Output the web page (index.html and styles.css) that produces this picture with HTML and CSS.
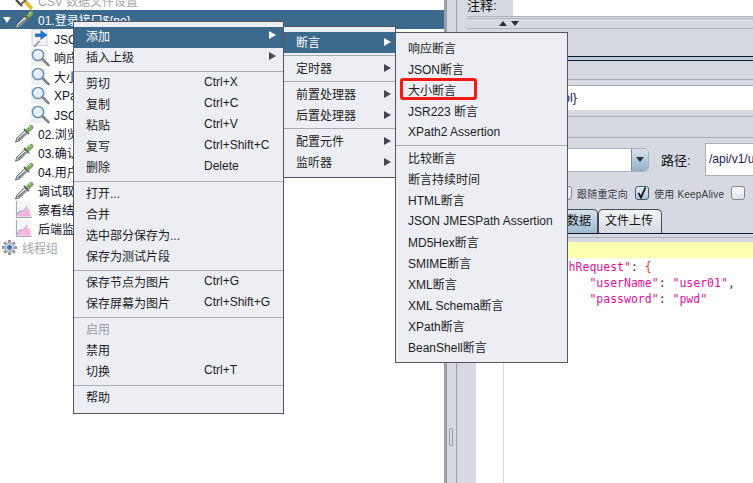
FILE: index.html
```html
<!DOCTYPE html>
<html lang="zh">
<head>
  <meta charset="UTF-8" />
  <title>JMeter</title>
  <link rel="stylesheet" href="styles.css">
</head>
<body>
  <svg class="defs" width="0" height="0">
    <symbol id="i-dropper" viewBox="0 0 19 19">
      <path d="M0.5 18 L2 14 L10 6.5 L12.5 9 L5 16.5 Z" fill="#f0f2f3" stroke="#5a6066" stroke-width="1"/>
      <path d="M2 16.5 L3.5 14.5 L10.5 8.5 L11 9.5 L4.5 16 Z" fill="#6f767c"/>
      <path d="M9 5 L14 10" stroke="#5d6a58" stroke-width="1.8"/>
      <path d="M11.5 5.5 L14.5 2 Q16 0.5 17.5 1.8 Q19 3.4 17.5 5 L13.5 8 Z" fill="#7fb356" stroke="#5d9440" stroke-width="0.7"/>
      <path d="M14 3.8 L15.6 2.4" stroke="#d6ecc2" stroke-width="1"/>
    </symbol>
    <symbol id="i-lens" viewBox="0 0 19 19">
      <rect x="0" y="1.5" width="15" height="16.5" fill="#eef0f2"/>
      <circle cx="7" cy="7" r="5.6" fill="#e2eefa" stroke="#6c90b6" stroke-width="1.5"/>
      <path d="M4 5.5 Q5.5 3 8.5 3.4" stroke="#fff" stroke-width="1.3" fill="none"/>
      <path d="M11.5 11.2 L17.4 17.2" stroke="#808286" stroke-width="2.6" stroke-linecap="round"/>
    </symbol>
    <symbol id="i-extract" viewBox="0 0 19 19">
      <rect x="1" y="0.5" width="15" height="16" fill="#f1f3f4" stroke="#d0d2d6"/>
      <path d="M9.5 1 L16.5 6 L9.5 11 L9.5 8 L4 8 L4 4.5 L9.5 4.5 Z" fill="#2a73c9"/>
      <path d="M8.5 12 L3 18" stroke="#8b9096" stroke-width="1.6"/>
    </symbol>
    <symbol id="i-chart" viewBox="0 0 19 19">
      <rect x="0.5" y="0.5" width="16" height="17" fill="#f3f4f6"/>
      <path d="M1.5 1 V17.5 H17" fill="none" stroke="#a6a9ae"/>
      <path d="M2 16.5 Q4 11 7 12 Q9 13 11 8 Q14 8 15 12 L16 16.5 Z" fill="#f4b4de"/>
      <path d="M2 15 Q4 10 7 11 Q9 12 12 6" fill="none" stroke="#a08fc8"/>
    </symbol>
    <symbol id="i-gear" viewBox="0 0 17 17">
      <path d="M8.5 1 V16 M1 8.5 H16 M3.2 3.2 L13.8 13.8 M13.8 3.2 L3.2 13.8" stroke="#8f959c" stroke-width="3"/>
      <circle cx="8.5" cy="8.5" r="5.2" fill="#b4bac0"/>
      <circle cx="8.5" cy="8.5" r="3" fill="#3f6fa6" stroke="#eef2f5"/>
    </symbol>
    <symbol id="i-broom" viewBox="0 0 19 10">
      <path d="M1 0 L7 6" stroke="#444" stroke-width="2.2"/>
      <path d="M9 0 L17 9" stroke="#e8b820" stroke-width="3.4"/>
      <path d="M6 4 L11 0" stroke="#6b6b6b" stroke-width="2"/>
    </symbol>
  </svg>

  <div class="app">
    <div class="tree">
      <div class="node muted"><svg class="ico-top"><use href="#i-broom"/></svg>CSV 数据文件设置</div>
      <div class="node selected"><span class="twist"></span><svg class="ico"><use href="#i-dropper"/></svg>01.登录接口${no}</div>
      <div class="node sub"><svg class="ico"><use href="#i-extract"/></svg>JSON提取</div>
      <div class="node sub"><svg class="ico"><use href="#i-lens"/></svg>响应断言</div>
      <div class="node sub"><svg class="ico"><use href="#i-lens"/></svg>大小断言</div>
      <div class="node sub"><svg class="ico"><use href="#i-lens"/></svg>XPath2</div>
      <div class="node sub"><svg class="ico"><use href="#i-lens"/></svg>JSON断言</div>
      <div class="node"><svg class="ico"><use href="#i-dropper"/></svg>02.浏览</div>
      <div class="node"><svg class="ico"><use href="#i-dropper"/></svg>03.确认</div>
      <div class="node"><svg class="ico"><use href="#i-dropper"/></svg>04.用户</div>
      <div class="node"><svg class="ico"><use href="#i-dropper"/></svg>调试取样器</div>
      <div class="node"><svg class="ico"><use href="#i-chart"/></svg>察看结果树</div>
      <div class="node"><svg class="ico"><use href="#i-chart"/></svg>后端监听器</div>
      <div class="node root muted"><svg class="ico-gear"><use href="#i-gear"/></svg>线程组</div>
    </div>

    <div class="splitter"><span class="grip"></span></div>

    <div class="detail">
      <div class="comment-row"><span class="comment-label">注释:</span><div class="comment-input"></div></div>
      <div class="collapse-bar"><span class="tri-up"></span><span class="tri-down"></span></div>
      <div class="blue-rule"></div>
      <div class="name-box"><div class="name-input">ol}</div></div>
      <div class="name-gap"></div>
      <div class="path-row">
        <div class="combo"><div class="combo-btn"><span class="tri-down"></span></div></div>
        <span class="path-label">路径:</span>
        <div class="path-input">/api/v1/user/login</div>
      </div>
      <div class="check-row">
        <span class="check"></span><span class="check-label">跟随重定向</span>
        <span class="check on"><svg width="12" height="12" viewBox="0 0 12 12"><path d="M2.5 6 L5 10.5 L9.5 0.5" fill="none" stroke="#111" stroke-width="1.8"/></svg></span><span class="check-label">使用 KeepAlive</span>
        <span class="check"></span>
      </div>
      <div class="tabs">
        <div class="tab active">消息体数据</div>
        <div class="tab">文件上传</div>
      </div>
      <div class="tab-rule"></div>
      <div class="editor">
        <div class="hint"></div>
        <div class="code-wrap">
          <div class="gutter"></div>
<pre class="code"><span class="k"> "authRequest"</span><span class="p">:</span> <span class="b">{</span>
<span class="k">        "userName"</span><span class="p">:</span> <span class="k">"user01"</span><span class="p">,</span>
<span class="k">        "password"</span><span class="p">:</span> <span class="k">"pwd"</span></pre>
        </div>
      </div>
    </div>
  </div>

  <div class="menu menu-main">
    <div class="item hot"><span class="label">添加</span><span class="arrow"></span></div>
    <div class="item"><span class="label">插入上级</span><span class="arrow"></span></div>
    <div class="sep"></div>
    <div class="item"><span class="label">剪切</span><span>Ctrl+X</span></div>
    <div class="item"><span class="label">复制</span><span>Ctrl+C</span></div>
    <div class="item"><span class="label">粘贴</span><span>Ctrl+V</span></div>
    <div class="item"><span class="label">复写</span><span>Ctrl+Shift+C</span></div>
    <div class="item"><span class="label">删除</span><span>Delete</span></div>
    <div class="sep"></div>
    <div class="item"><span class="label">打开...</span></div>
    <div class="item"><span class="label">合并</span></div>
    <div class="item"><span class="label">选中部分保存为...</span></div>
    <div class="item"><span class="label">保存为测试片段</span></div>
    <div class="sep"></div>
    <div class="item"><span class="label">保存节点为图片</span><span>Ctrl+G</span></div>
    <div class="item"><span class="label">保存屏幕为图片</span><span>Ctrl+Shift+G</span></div>
    <div class="sep"></div>
    <div class="item off"><span class="label">启用</span></div>
    <div class="item"><span class="label">禁用</span></div>
    <div class="item"><span class="label">切换</span><span>Ctrl+T</span></div>
    <div class="sep"></div>
    <div class="item"><span class="label">帮助</span></div>
  </div>

  <div class="menu menu-add">
    <div class="item hot"><span class="label">断言</span><span class="arrow"></span></div>
    <div class="sep"></div>
    <div class="item"><span class="label">定时器</span><span class="arrow"></span></div>
    <div class="sep"></div>
    <div class="item"><span class="label">前置处理器</span><span class="arrow"></span></div>
    <div class="item"><span class="label">后置处理器</span><span class="arrow"></span></div>
    <div class="sep"></div>
    <div class="item"><span class="label">配置元件</span><span class="arrow"></span></div>
    <div class="item"><span class="label">监听器</span><span class="arrow"></span></div>
  </div>

  <div class="menu menu-assert">
    <div class="item">响应断言</div>
    <div class="item">JSON断言</div>
    <div class="item">大小断言<span class="mark"></span></div>
    <div class="item">JSR223 断言</div>
    <div class="item">XPath2 Assertion</div>
    <div class="sep"></div>
    <div class="item">比较断言</div>
    <div class="item">断言持续时间</div>
    <div class="item">HTML断言</div>
    <div class="item">JSON JMESPath Assertion</div>
    <div class="item">MD5Hex断言</div>
    <div class="item">SMIME断言</div>
    <div class="item">XML断言</div>
    <div class="item">XML Schema断言</div>
    <div class="item">XPath断言</div>
    <div class="item">BeanShell断言</div>
  </div>
</body>
</html>
```

FILE: styles.css
```css
:root {
  --panel: #d6d9e1;
  --menu: #eceef3;
  --hot: #3c6a8c;
  --line: #a9abb5;
  --dark: #10182a;
}

html, body {
  margin: 0;
  height: 100%;
  overflow: hidden;
  background: #fff;
}

body {
  position: relative;
  font-family: "Liberation Sans", "Noto Sans CJK SC", sans-serif;
  font-size: 12px;
  color: #1c1c24;
}

.defs {
  position: absolute;
}

.app {
  display: flex;
  width: 753px;
  height: 483px;
  overflow: hidden;
}

/* left tree */
.tree {
  width: 444px;
  flex: none;
  margin-top: -9px;
}

.node {
  display: flex;
  align-items: center;
  height: 19px;
  padding-left: 15px;
  color: #10102a;
  white-space: nowrap;
}

.node.sub {
  padding-left: 31px;
}

.node.selected {
  position: relative;
  background: var(--hot);
  color: #fff;
}

.node.muted {
  color: #a4a6aa;
}

.node.root {
  padding-left: 1px;
}

.ico {
  width: 19px;
  height: 19px;
  margin-right: 4px;
  flex: none;
}

.ico-top {
  width: 19px;
  height: 10px;
  margin: 9px 4px 0 0;
  flex: none;
}

.ico-gear {
  width: 17px;
  height: 17px;
  margin-right: 4px;
  flex: none;
}

.twist {
  position: absolute;
  left: 3px;
  top: 7px;
  border-left: 4px solid transparent;
  border-right: 4px solid transparent;
  border-top: 6px solid #fff;
}

/* splitter */
.splitter {
  position: relative;
  width: 9px;
  flex: none;
  background: var(--panel);
  border-left: 3px solid #9b9da8;
  border-right: 1px solid #9b9da8;
}

.grip {
  position: absolute;
  left: 2px;
  top: 428px;
  width: 2px;
  height: 16px;
  border: 1px solid #9b9da8;
  border-radius: 1px;
}

/* right side */
.detail {
  flex: 1;
  min-width: 0;
  display: flex;
  flex-direction: column;
  background: var(--panel);
}

.comment-row {
  display: flex;
  height: 16px;
  flex: none;
}

.comment-label {
  width: 56px;
  padding-left: 10px;
  box-sizing: border-box;
  font-size: 13px;
  line-height: 11px;
  color: #111;
}

.comment-input {
  flex: 1;
  background: #fff;
}

.collapse-bar {
  display: flex;
  align-items: center;
  gap: 4px;
  flex: none;
  box-sizing: border-box;
  height: 13px;
  margin-left: 10px;
  padding-left: 32px;
  border-top: 3px double #b0b2bb;
  border-bottom: 1px solid #b0b2bb;
}

.tri-up, .tri-down {
  display: block;
  border-left: 4px solid transparent;
  border-right: 4px solid transparent;
}

.tri-up {
  border-bottom: 5px solid #2c2f38;
}

.tri-down {
  border-top: 5px solid #2c2f38;
}

.blue-rule {
  flex: none;
  height: 3px;
  margin-top: 27px;
  margin-left: 10px;
  background: #b9cfe2;
  border-top: 1px solid var(--dark);
  border-bottom: 1px solid var(--dark);
}

.name-box {
  flex: none;
  box-sizing: border-box;
  height: 38px;
  margin: 18px 0 0 10px;
  padding-top: 5px;
  border-top: 1px solid var(--line);
  border-bottom: 1px solid var(--line);
}

.name-input {
  box-sizing: border-box;
  height: 25px;
  padding: 1px 0 0 96px;
  background: #fff;
  border-top: 1px solid var(--line);
  line-height: 22px;
  font-size: 12.5px;
  color: #1a1a55;
}

.name-gap {
  flex: none;
  height: 20px;
  margin-left: 10px;
  border-bottom: 1px solid var(--line);
}

.path-row {
  display: flex;
  align-items: center;
  flex: none;
  height: 33px;
  margin-top: 5px;
  padding-left: 10px;
}

.combo {
  display: flex;
  justify-content: flex-end;
  box-sizing: border-box;
  width: 182px;
  height: 24px;
  background: #fff;
  border: 1px solid #aeb0b8;
  border-radius: 0 5px 5px 0;
}

.combo-btn {
  display: flex;
  align-items: center;
  justify-content: center;
  width: 16px;
  background: linear-gradient(#d7e3ee, #8fb0cb);
  border-left: 1px solid #7e8a98;
  border-radius: 0 4px 4px 0;
}

.path-label {
  width: 44px;
  margin-left: 12px;
  font-size: 13px;
  color: #111;
  flex: none;
}

.path-input {
  flex: 1;
  height: 33px;
  box-sizing: border-box;
  padding-left: 3px;
  background: #fff;
  border: 1px solid #aeb0b8;
  border-right: 0;
  line-height: 31px;
  font-size: 12px;
  color: #1a1a55;
  white-space: nowrap;
  overflow: hidden;
}

.check-row {
  display: flex;
  align-items: center;
  flex: none;
  height: 14px;
  margin-top: 10px;
  padding-left: 101px;
  font-size: 10px;
  letter-spacing: 0.2px;
  color: #3a3c44;
  white-space: nowrap;
}

.check {
  display: block;
  box-sizing: border-box;
  width: 14px;
  height: 14px;
  background: linear-gradient(#fff, #dfe3e8);
  border: 1px solid #7e8590;
  border-radius: 3px;
  flex: none;
}

.check.on {
  background: linear-gradient(#e4ecf3, #aac3d8);
  border-color: #46586c;
}

.check svg {
  display: block;
}

.check-label {
  margin: 0 7px 0 5px;
}

.tabs {
  display: flex;
  justify-content: flex-end;
  flex: none;
  height: 24px;
  margin-top: 9px;
  padding-right: 91px;
}

.tab {
  box-sizing: border-box;
  width: 64px;
  padding-left: 6px;
  background: linear-gradient(#f3f4f7, #d6d9e1);
  border: 1px solid #444a58;
  border-bottom: 0;
  border-radius: 5px 5px 0 0;
  line-height: 22px;
  color: #111;
  white-space: nowrap;
}

.tab.active {
  width: 90px;
  background: linear-gradient(#d7e2eb, #9dbad1);
  text-align: right;
  padding-right: 6px;
}

.tab-rule {
  flex: none;
  height: 3px;
  margin-left: 10px;
  border-top: 1px solid var(--dark);
  border-bottom: 1px solid var(--line);
}

.editor {
  flex: 1;
  margin: 4px 0 0 19px;
  background: #fff;
  display: flex;
  flex-direction: column;
}

.hint {
  flex: none;
  height: 16px;
  background: #ffffb0;
}

.code-wrap {
  flex: 1;
  display: flex;
}

.gutter {
  flex: none;
  width: 27px;
  border-right: 1px solid #d8d8d8;
}

.code {
  margin: 1px 0 0;
  padding-left: 30px;
  font-family: "DejaVu Sans Mono", monospace;
  font-size: 11.5px;
  line-height: 16px;
}

.code .k { color: #e0109c; }
.code .p { color: #333; }
.code .b { color: #f03c20; }

/* context menus */
.menu {
  position: absolute;
  box-sizing: border-box;
  padding: 5px 0 4px;
  background: var(--menu);
  border: 1px solid #55565c;
}

.menu-main {
  left: 73px;
  top: 21px;
  width: 211px;
}

.menu-add {
  left: 283px;
  top: 26px;
  width: 113px;
}

.menu-assert {
  left: 395px;
  top: 32px;
  width: 173px;
}

.item {
  position: relative;
  display: flex;
  align-items: center;
  box-sizing: border-box;
  height: 21px;
  padding: 0 0 2px 12px;
  white-space: nowrap;
}

.menu-main .item {
  padding-bottom: 5px;
}

.item.hot {
  background: var(--hot);
  color: #fff;
}

.item.off {
  color: #9a9ba2;
}

.label {
  width: 118px;
  flex: none;
}

.menu-add .label {
  width: 88px;
}

.menu-main .item .arrow {
  margin-left: 65px;
}

.arrow {
  display: block;
  border-top: 4.5px solid transparent;
  border-bottom: 4.5px solid transparent;
  border-left: 7px solid #444650;
}

.hot .arrow {
  border-left-color: #fff;
}

.sep {
  height: 1px;
  margin: 2px 0;
  background: var(--line);
}

.mark {
  position: absolute;
  left: 4px;
  top: -2px;
  width: 71px;
  height: 16px;
  border: 3px solid #f41a14;
  border-radius: 3px;
}
```
